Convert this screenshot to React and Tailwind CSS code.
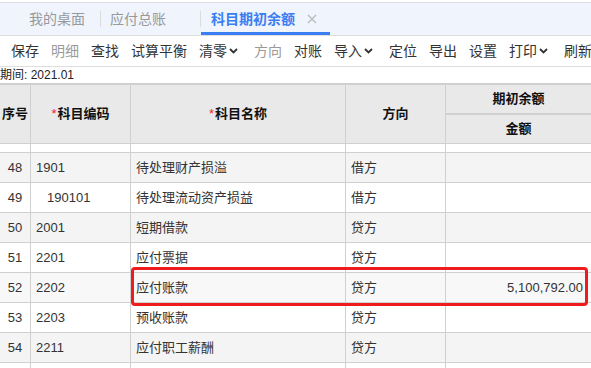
import React from "react";

const tabs = [
  { label: "我的桌面", cls: "pl-[15px] pr-[15px]" },
  { label: "应付总账", cls: "pl-[9px] pr-[34px]" },
];

const tools = [
  { label: "保存" },
  { label: "明细", disabled: true },
  { label: "查找" },
  { label: "试算平衡" },
  { label: "清零", menu: true },
  { label: "方向", disabled: true },
  { label: "对账" },
  { label: "导入", menu: true },
  { label: "定位" },
  { label: "导出" },
  { label: "设置" },
  { label: "打印", menu: true },
  { label: "刷新" },
];

const rows = [
  { no: 48, code: "1901", name: "待处理财产损溢", dir: "借方" },
  { no: 49, code: "190101", name: "待处理流动资产损益", dir: "借方", sub: true },
  { no: 50, code: "2001", name: "短期借款", dir: "贷方" },
  { no: 51, code: "2201", name: "应付票据", dir: "贷方" },
  { no: 52, code: "2202", name: "应付账款", dir: "贷方", amount: "5,100,792.00", marked: true },
  { no: 53, code: "2203", name: "预收账款", dir: "贷方" },
  { no: 54, code: "2211", name: "应付职工薪酬", dir: "贷方" },
  { no: 55, code: "", name: "", dir: "", blank: true },
];

const Chevron = () => (
  <svg width="9" height="6" viewBox="0 0 9 6" className="ml-[2px] mr-[4px]">
    <path d="M1 1 L4.5 4.5 L8 1" fill="none" stroke="#333" strokeWidth="1.8" />
  </svg>
);

const Required = ({ children }) => (
  <span>
    <span className="text-[#f5222d] font-normal mr-[1px]">*</span>
    {children}
  </span>
);

export default function App() {
  return (
    <div
      className="w-[591px] h-[368px] overflow-hidden bg-white text-[#333]"
      style={{ fontFamily: '"Liberation Sans", "Noto Sans CJK SC", sans-serif' }}
    >
      {/* tabs */}
      <div className="pt-[2px]">
        <div className="h-[34px] bg-[#eff4fd] border-t border-b border-[#dedede] flex items-stretch pl-[14px] text-[14px]">
          {tabs.map((t) => (
            <div key={t.label} className="flex items-center">
              <span className={`${t.cls} text-[#999]`}>{t.label}</span>
              <span className="w-px h-[16px] bg-[#dcdcdc]" />
            </div>
          ))}
          <div className="relative flex items-center pl-[10px] pr-[13px]">
            <span className="font-bold text-[#3a7ef2]">科目期初余额</span>
            <svg width="10" height="10" viewBox="0 0 10 10" className="ml-[12px]">
              <path d="M1 1 L9 9 M9 1 L1 9" stroke="#bbb" strokeWidth="1.4" />
            </svg>
            <span className="absolute left-0 right-0 bottom-0 h-[3px] bg-[#3a7ef2]" />
          </div>
        </div>
      </div>

      {/* toolbar */}
      <div className="h-[31px] border-b border-[#dedede] flex items-center pl-[5px] text-[14px] whitespace-nowrap">
        {tools.map((t) => (
          <div key={t.label} className="flex items-center px-[6px]">
            <span className={t.disabled ? "text-[#9a9a9a]" : "text-[#333]"}>{t.label}</span>
            {t.menu && <Chevron />}
          </div>
        ))}
      </div>

      {/* period */}
      <div className="h-[16px] flex items-center text-[12px] leading-none text-[#222]">期间: 2021.01</div>

      {/* table */}
      <div className="w-[620px] border-t-2 border-[#cfcfcf] text-[13px]">
        <div className="flex bg-[#e9e9e9] font-bold text-[#111] border-b border-[#d0d0d0]">
          <div className="w-[31px] h-[58px] border-r border-[#d0d0d0] flex items-center justify-center">序号</div>
          <div className="w-[100px] h-[58px] border-r border-[#d0d0d0] flex items-center justify-center">
            <Required>科目编码</Required>
          </div>
          <div className="w-[215px] h-[58px] border-r border-[#d0d0d0] flex items-center justify-center">
            <Required>科目名称</Required>
          </div>
          <div className="w-[100px] h-[58px] border-r border-[#d0d0d0] flex items-center justify-center">方向</div>
          <div className="w-[145px] flex flex-col">
            <div className="h-[30px] border-b-2 border-[#d0d0d0] flex items-center justify-center">期初余额</div>
            <div className="h-[28px] flex items-center justify-center">金额</div>
          </div>
        </div>

        <div className="flex h-[9px] border-b border-[#d0d0d0]">
          <div className="w-[31px] border-r border-[#d0d0d0]" />
          <div className="w-[100px] border-r border-[#d0d0d0]" />
          <div className="w-[215px] border-r border-[#d0d0d0]" />
          <div className="w-[100px] border-r border-[#d0d0d0]" />
          <div className="flex-1" />
        </div>

        {rows.map((r) => (
          <div
            key={r.no}
            className={`relative flex h-[30px] border-b border-[#d0d0d0] ${
              r.no % 2 === 0 ? (r.marked ? "bg-[#f8f8f8]" : "bg-[#f4f4f4]") : "bg-white"
            }`}
          >
            <div className="w-[31px] border-r border-[#d0d0d0] flex items-center justify-center">
              {r.blank ? "" : r.no}
            </div>
            <div className={`w-[100px] border-r border-[#d0d0d0] flex items-center ${r.sub ? "pl-[16px]" : "pl-[5px]"}`}>
              {r.code}
            </div>
            <div className="w-[215px] border-r border-[#d0d0d0] flex items-center pl-[5px]">{r.name}</div>
            <div className="w-[100px] border-r border-[#d0d0d0] flex items-center pl-[5px]">{r.dir}</div>
            <div className="w-[145px] flex items-center justify-end pr-[8px]">{r.amount}</div>
            {r.marked && (
              <div className="absolute z-10 left-[131px] top-[-6px] w-[457px] h-[39px] border-[3px] border-[#ee1c1c] rounded-[4px]" />
            )}
          </div>
        ))}
      </div>
    </div>
  );
}
